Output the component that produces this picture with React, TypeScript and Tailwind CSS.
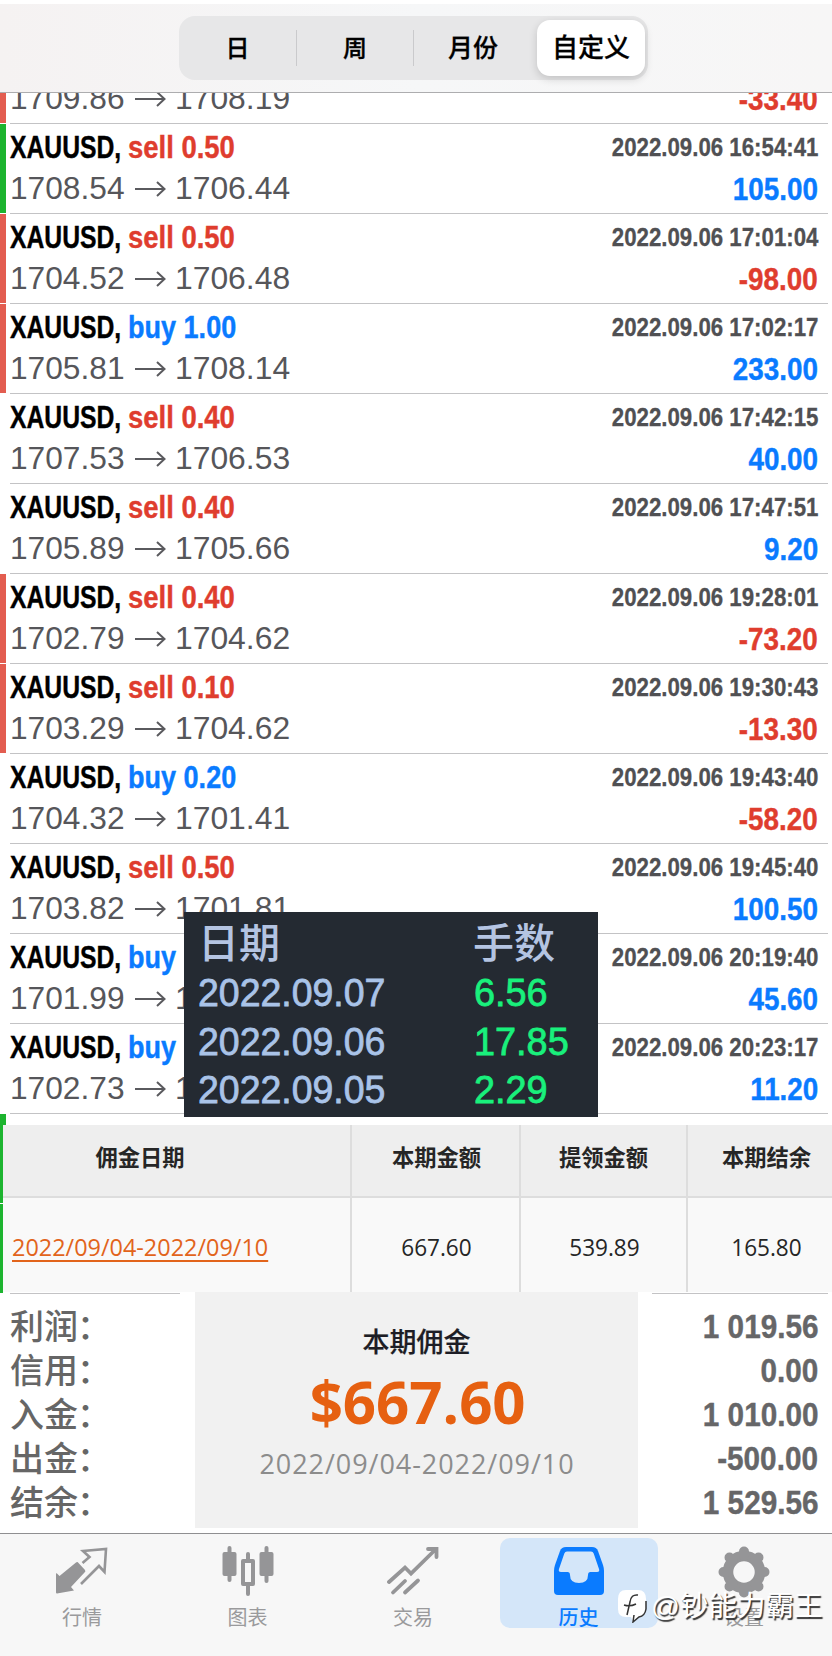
import React from 'react';

interface Deal {
  side: 'sell' | 'buy';
  lots: string;
  open: string;
  close: string;
  time?: string;
  profit: string;
  mark?: 'red' | 'green';
}

// The first deal is scrolled half under the header, only its prices are visible
const deals: Deal[] = [
  { side: 'sell', lots: '0.50', open: '1709.86', close: '1708.19', profit: '-33.40', mark: 'red' },
  { side: 'sell', lots: '0.50', open: '1708.54', close: '1706.44', time: '2022.09.06 16:54:41', profit: '105.00', mark: 'green' },
  { side: 'sell', lots: '0.50', open: '1704.52', close: '1706.48', time: '2022.09.06 17:01:04', profit: '-98.00', mark: 'red' },
  { side: 'buy', lots: '1.00', open: '1705.81', close: '1708.14', time: '2022.09.06 17:02:17', profit: '233.00', mark: 'red' },
  { side: 'sell', lots: '0.40', open: '1707.53', close: '1706.53', time: '2022.09.06 17:42:15', profit: '40.00' },
  { side: 'sell', lots: '0.40', open: '1705.89', close: '1705.66', time: '2022.09.06 17:47:51', profit: '9.20' },
  { side: 'sell', lots: '0.40', open: '1702.79', close: '1704.62', time: '2022.09.06 19:28:01', profit: '-73.20', mark: 'red' },
  { side: 'sell', lots: '0.10', open: '1703.29', close: '1704.62', time: '2022.09.06 19:30:43', profit: '-13.30', mark: 'red' },
  { side: 'buy', lots: '0.20', open: '1704.32', close: '1701.41', time: '2022.09.06 19:43:40', profit: '-58.20' },
  { side: 'sell', lots: '0.50', open: '1703.82', close: '1701.81', time: '2022.09.06 19:45:40', profit: '100.50' },
  { side: 'buy', lots: '0.20', open: '1701.99', close: '1704.27', time: '2022.09.06 20:19:40', profit: '45.60' },
  { side: 'buy', lots: '0.20', open: '1702.73', close: '1703.29', time: '2022.09.06 20:23:17', profit: '11.20' },
];

const lotsByDay = [
  ['2022.09.07', '6.56'],
  ['2022.09.06', '17.85'],
  ['2022.09.05', '2.29'],
];

const summary = [
  ['利润', '1 019.56'],
  ['信用', '0.00'],
  ['入金', '1 010.00'],
  ['出金', '-500.00'],
  ['结余', '1 529.56'],
];

const markColor = { red: 'bg-[#e35d50]', green: 'bg-[#1db42f]' };

const DealRow: React.FC<{ deal: Deal }> = ({ deal }) => (
  <div className="flex h-[90px] shrink-0">
    <div className={`h-[89px] w-[6px] ${deal.mark ? markColor[deal.mark] : ''}`} />
    <div className="ml-1 mr-1 flex flex-1 justify-between border-b border-[#c3c3c5] pr-[10px] pt-[3px]">
      <div>
        <div className="flex h-10 items-center whitespace-nowrap text-[32px] font-bold leading-10 [-webkit-text-stroke:0.4px]">
          {deal.time && (
            <>
              <span className="w-[118px] origin-left scale-x-[0.772] text-black">XAUUSD,</span>
              <span className={`origin-left ${deal.side === 'sell' ? 'scale-x-[0.858] text-[#df3d2e]' : 'scale-x-[0.845] text-[#0a7bff]'}`}>
                {deal.side} {deal.lots}
              </span>
            </>
          )}
        </div>
        <div className="flex h-[43px] items-center text-[32px] leading-[43px] text-[#56565a]">
          <span className="w-[126px] origin-left scale-x-[0.99]">{deal.open}</span>
          <svg width="31" height="18" viewBox="0 0 31 18" fill="none" stroke="#5a5a5e" strokeWidth="2" className="-ml-px mr-[9px]">
            <path d="M0 9h29M22 2l7.5 7-7.5 7" />
          </svg>
          <span className="origin-left scale-x-[0.995]">{deal.close}</span>
        </div>
      </div>
      <div className="flex flex-col items-end whitespace-nowrap font-bold">
        <span className="h-10 origin-right scale-x-[0.856] text-[26px] leading-10 text-[#505053] [-webkit-text-stroke:0.3px]">{deal.time}</span>
        <span
          className={`h-[45px] origin-right scale-x-[0.87] text-[32px] leading-[45px] [-webkit-text-stroke:0.4px] ${
            deal.profit.startsWith('-') ? 'text-[#df3d2e]' : 'text-[#0a7bff]'
          }`}
        >
          {deal.profit}
        </span>
      </div>
    </div>
  </div>
);

const PeriodTabs = () => (
  <header className="h-[93px] border-b border-[#adadaf] bg-linear-to-r from-[#f5f2f2] via-[#f6f7f8] to-[#f7f6f6] pt-4 shadow-[inset_0_4px_0_#fff]">
    <div className="ml-[179px] flex h-16 w-[469px] items-center rounded-[16px] bg-[#e7e7e8] text-[24px] font-medium text-black [-webkit-text-stroke:0.3px]">
      <div className="flex h-9 w-[118px] items-center justify-center border-r border-[#cacacc] pt-px">日</div>
      <div className="flex h-9 w-[117px] items-center justify-center border-r border-[#cacacc] pt-px">周</div>
      <div className="flex h-9 w-[123px] items-center justify-center pr-[5px] pt-px text-[25px]">月份</div>
      <div className="flex h-14 w-[108px] items-center justify-center rounded-[13px] bg-white pt-px text-[26px] shadow-[0_3px_8px_rgba(0,0,0,0.16)]">
        自定义
      </div>
    </div>
  </header>
);

const LotsPanel = () => (
  <div className="absolute left-[184px] top-[819px] h-[205px] w-[414px] bg-[#242a32] pl-[14px] pt-[8px]">
    <div className="flex h-[49px] items-center text-[41px] font-medium leading-[49px] text-[#b4c4e2]">
      <span className="w-[275px]">日期</span>
      <span>手数</span>
    </div>
    {lotsByDay.map(([day, lots]) => (
      <div key={day} className="flex h-[48.5px] items-center text-[39px] leading-[48px] [-webkit-text-stroke:0.8px]">
        <span className="w-[276px] origin-left scale-x-[0.96] text-[#a9c3e8]">{day}</span>
        <span className="origin-left scale-x-[0.97] text-[#19f07c]">{lots}</span>
      </div>
    ))}
  </div>
);

const CommissionTable = () => (
  <div className="flex h-[168px]">
    <div className="flex w-[3px] flex-col gap-px">
      <div className="h-[78px] bg-[#1db42f]" />
      <div className="flex-1 bg-[#1db42f]" />
    </div>
    <div className="grid flex-1 grid-cols-[349px_169px_167px_144px] grid-rows-[73px_94px] text-center text-[#262626] [font-family:'Open_Sans','Noto_Sans_CJK_SC',sans-serif]">
      {['佣金日期', '本期金额', '提领金额', '本期结余'].map((title, i) => (
        <div
          key={title}
          className={`border-b-2 border-[#dddddd] bg-[#eeeeee] text-[22.3px] font-bold leading-[66px] ${i < 3 ? 'border-r-2' : 'pl-[13px]'} ${i === 0 ? 'pr-[73px]' : ''} ${i === 1 ? 'pl-[2px]' : ''}`}
        >
          {title}
        </div>
      ))}
      <div className="border-r-2 border-[#dddddd] bg-[#f9f9f9] pl-[9px] text-left text-[24px] leading-[97px] text-[#e2641b]">
        <span className="inline-block origin-left scale-x-[0.976] underline decoration-2 underline-offset-4">2022/09/04-2022/09/10</span>
      </div>
      {['667.60', '539.89', '165.80'].map((value, i) => (
        <div key={value} className={`border-[#dddddd] bg-[#f9f9f9] text-[24px] leading-[97px] ${i < 2 ? 'border-r-2 pl-px' : 'pl-[13px]'}`}>
          <span className="inline-block scale-x-[0.94]">{value}</span>
        </div>
      ))}
    </div>
  </div>
);

const Summary = () => (
  <div className="flex h-[240px] justify-between">
    <div className="ml-[10px] w-[170px] pt-[12px] shadow-[inset_0_1px_0_#c3c3c5]">
      {summary.map(([label]) => (
        <div key={label} className="h-11 whitespace-nowrap text-[34px] font-medium leading-[44px] text-[#666666]">
          {label}
          <span className="-ml-px">：</span>
        </div>
      ))}
    </div>
    <div className="-mt-px ml-[15px] h-[236px] w-[443px] bg-[#f1f1f1] text-center [font-family:'Open_Sans','Noto_Sans_CJK_SC',sans-serif]">
      <div className="mt-[29px] h-[42px] text-[27px] font-medium leading-[42px] text-[#1d1d25] [-webkit-text-stroke:0.2px]">本期佣金</div>
      <div className="h-[78px] pl-[2px] text-[59px] font-bold leading-[77px] text-[#e66011]">
        <span className="inline-block scale-x-[0.985]">$667.60</span>
      </div>
      <div className="h-[46px] pl-px text-[27px] leading-[46px] tracking-[0.95px] text-[#8c8c8c]">2022/09/04-2022/09/10</div>
    </div>
    <div className="ml-[14px] mr-1 flex flex-1 flex-col items-end pr-[10px] pt-[12px] font-bold text-[#666668] shadow-[inset_0_1px_0_#c3c3c5]">
      {summary.map(([label, value]) => (
        <span key={label} className="h-11 origin-right scale-x-[0.9] whitespace-nowrap text-[33px] leading-[44px] [-webkit-text-stroke:0.4px]">
          {value}
        </span>
      ))}
    </div>
  </div>
);

const QuotesIcon = () => (
  <svg width="52" height="50" viewBox="0 0 52 50">
    <path d="M0.5 27L3.5 30 20 16.5Q21.500 15.500 22.500 17L29 24Q30 25.500 28.500 26.500L15 41 18 44.500 1 47.500Q0 47.500 0 46.500V28Z" fill="#959597" />
    <path d="M26.500 17L33.500 11 27 5 50 3 48.500 26 43 20 25 38" fill="none" stroke="#959597" strokeWidth="2.600" />
  </svg>
);

const ChartIcon = () => (
  <svg width="52" height="50" viewBox="0 0 52 50" fill="#959597">
    <rect x="0.500" y="6" width="14" height="24" rx="2" />
    <rect x="5.500" y="0" width="4" height="36" rx="2" />
    <rect x="37.500" y="6" width="14" height="24" rx="2" />
    <rect x="42.500" y="0" width="4" height="37" rx="2" />
    <path d="M24 8q0-2 2-2t2 2v5h3q2 0 2 2v23q0 2-2 2h-3v8q0 2-2 2t-2-2v-8h-3q-2 0-2-2V15q0-2 2-2h3ZM23 17v19h6V17Z" fillRule="evenodd" />
  </svg>
);

const TradeIcon = () => (
  <svg width="52" height="50" viewBox="0 0 52 50" fill="none" stroke="#959597" strokeWidth="3.800" strokeLinecap="round">
    <path d="M2 36L18 21.500 24 27.500 49 3M41 3H49.500V11" />
    <path d="M6 46.500L18 35M18 46.500L31 34.500" />
  </svg>
);

const HistoryIcon = () => (
  <svg width="52" height="50" viewBox="0 0 52 50">
    <path d="M13 1h26q4.500 0 6 4l5 14q1 3 1 6v20q0 4-4 4H5q-4 0-4-4V25q0-3 1-6L7 5q1.500-4 6-4Z" fill="#0a7bff" />
    <path d="M14 5.500h24q2 0 2.700 2L46 23q1 3-2 3h-6.500q-2.500 0-2.500 3 0 8-9 8t-9-8q0-3-2.500-3H8q-3 0-2-3L11.300 7.500q.7-2 2.700-2Z" fill="#d4e6f9" />
  </svg>
);

const SettingsIcon = () => (
  <svg width="52" height="52" viewBox="0 0 52 52" fill="none" stroke="#959597">
    <circle cx="26" cy="26" r="16" strokeWidth="10.500" />
    <g strokeWidth="10" strokeLinecap="round">
      <path d="M26 5.500v4M26 46.500v-4M5.500 26h4M46.500 26h-4M11.500 11.500l3 3M40.500 11.500l-3 3M11.500 40.500l3-3M40.500 40.500l-3-3" />
    </g>
  </svg>
);

const tabs = [
  { label: '行情', icon: QuotesIcon },
  { label: '图表', icon: ChartIcon },
  { label: '交易', icon: TradeIcon },
  { label: '历史', icon: HistoryIcon, active: true },
  { label: '设置', icon: SettingsIcon },
];

const Watermark = () => (
  <div className="absolute left-[617px] top-[54px] flex h-[36px] items-center whitespace-nowrap text-[28.5px] leading-[36px] text-white [text-shadow:1.5px_1.5px_1px_#333]">
    <svg width="30" height="34" viewBox="0 0 30 34" className="mr-1">
      <path d="M9 1h12q8 0 8 9v10q0 7-7 8l-6 5-2-5H9q-8 0-8-8V10q0-9 8-9Z" fill="#fff" />
      <path d="M21 6q-7-1-8 7l-3 13M7 16q6 2 12-1M29 12v8q-1 7-7 8l-6 5 1-7" fill="none" stroke="#333" strokeWidth="1.500" />
    </svg>
    <span>@钞能力霸王</span>
  </div>
);

export default function App() {
  return (
    <div className="h-[1656px] w-[832px] overflow-hidden bg-white [font-family:'Liberation_Sans','Noto_Sans_CJK_SC',sans-serif]">
      <PeriodTabs />
      <div className="relative">
        <div className="flex h-[1032px] flex-col overflow-hidden">
          <div className="-mt-[59px]">
            {deals.map((deal, i) => (
              <DealRow key={i} deal={deal} />
            ))}
          </div>
          <div className="h-[11px] w-[6px] bg-[#1db42f]" />
        </div>
        <LotsPanel />
      </div>
      <CommissionTable />
      <Summary />
      <nav className="relative h-[123px] border-t border-[#8f8f91] bg-[#f7f7f7] pt-[4px]">
        <div className="flex gap-[7.5px] pl-[3px]">
          {tabs.map(({ label, icon: Icon, active }) => (
            <div
              key={label}
              className={`flex h-[90px] w-[158px] flex-col items-center rounded-[10px] pt-2 text-[20px] ${
                active ? 'bg-[#d4e6f9] font-medium text-[#0a7bff]' : 'text-[#9a9a9c]'
              }`}
            >
              <div className="h-[57px] shrink-0">
                <Icon />
              </div>
              <span className="shrink-0 pt-px leading-7">{label}</span>
            </div>
          ))}
        </div>
        <Watermark />
      </nav>
    </div>
  );
}
